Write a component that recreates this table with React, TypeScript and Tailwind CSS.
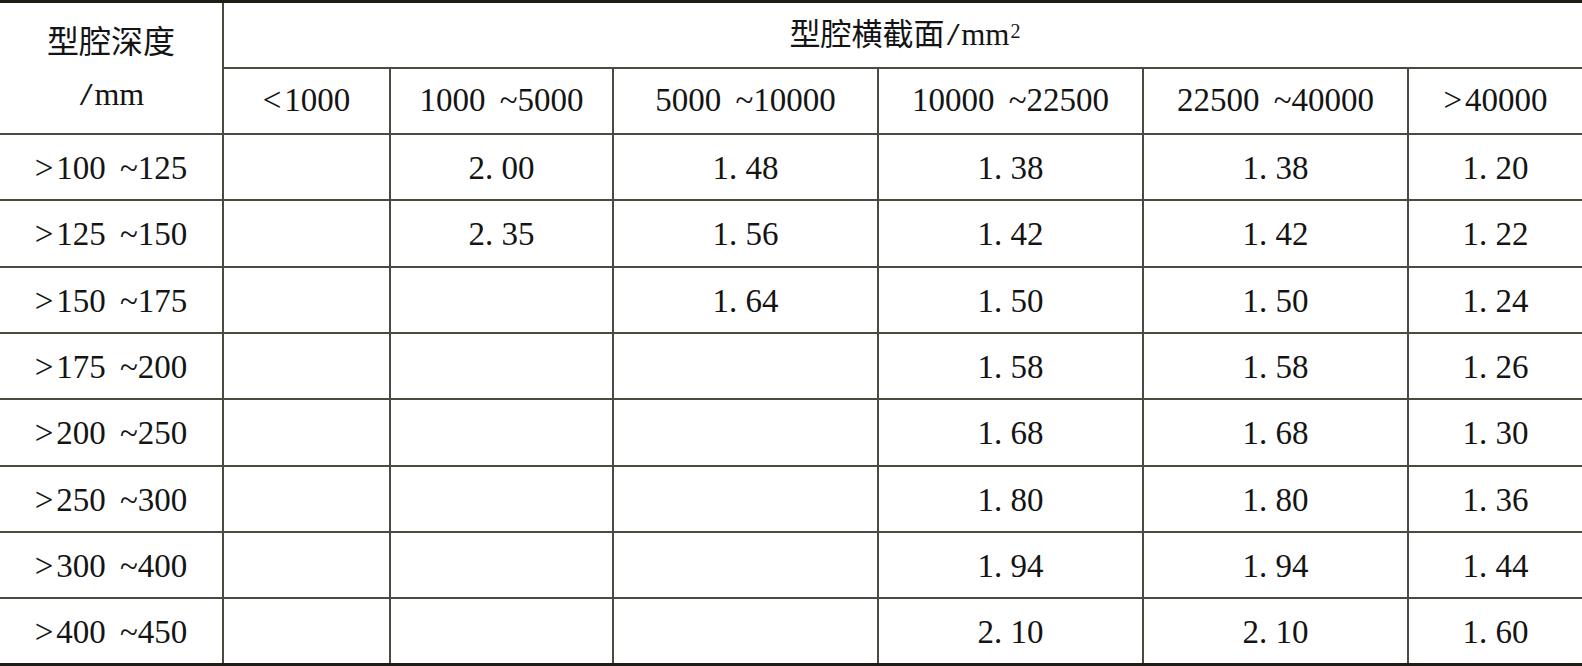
import React from 'react';

// 型腔深度 × 型腔横截面 系数表
const sizeCols = ['<1000', '1000 ~5000', '5000 ~10000', '10000 ~22500', '22500 ~40000', '>40000'];

const rows: string[][] = [
  ['>100 ~125', '', '2. 00', '1. 48', '1. 38', '1. 38', '1. 20'],
  ['>125 ~150', '', '2. 35', '1. 56', '1. 42', '1. 42', '1. 22'],
  ['>150 ~175', '', '', '1. 64', '1. 50', '1. 50', '1. 24'],
  ['>175 ~200', '', '', '', '1. 58', '1. 58', '1. 26'],
  ['>200 ~250', '', '', '', '1. 68', '1. 68', '1. 30'],
  ['>250 ~300', '', '', '', '1. 80', '1. 80', '1. 36'],
  ['>300 ~400', '', '', '', '1. 94', '1. 94', '1. 44'],
  ['>400 ~450', '', '', '', '2. 10', '2. 10', '1. 60'],
];

const line = 'border-[#4a4a40]';

// 范围文字：比较符后留一点空隙
const Range = ({ text }: { text: string }) => {
  const sign = text[0] === '>' || text[0] === '<' ? text[0] : '';
  const rest = sign ? text.slice(1) : text;
  return (
    <span className="[word-spacing:6px]">
      {sign && <span className="mr-[3px]">{sign}</span>}
      {rest}
    </span>
  );
};

const Slash = () => (
  <span className="inline-block mx-[4px] text-[31px] scale-x-[1.5]">/</span>
);

export default function App() {
  return (
    <div className="w-[1582px] h-[666px] bg-white text-[#141414] font-['Liberation_Serif','Noto_Sans_CJK_SC',serif] text-[33px]">
      <div className="grid h-full grid-cols-[224px_167px_223px_265px_265px_265px_1fr] grid-rows-[66px_66px_repeat(7,66.33px)_1fr] border-y-[3px] border-[#1f1e16]">
        {/* 表头 */}
        <div className={`row-span-2 flex flex-col items-center justify-center border-r-2 border-b-2 text-[32px] ${line}`}>
          <div className="leading-[52px]">型腔深度</div>
          <div className="leading-[52px]">
            <Slash />
            mm
          </div>
        </div>
        <div className={`col-span-6 flex items-center justify-center border-b-2 text-[31px] ${line}`}>
          <span className="ml-[4px]">
            型腔横截面
            <Slash />
            mm<sup className="text-[20px] relative -top-[7px] ml-[1px]">2</sup>
          </span>
        </div>
        {sizeCols.map((c, i) => (
          <div
            key={c}
            className={`flex items-center justify-center border-b-2 ${line} ${i < sizeCols.length - 1 ? 'border-r-2' : ''}`}
          >
            <Range text={c} />
          </div>
        ))}

        {/* 数据行 */}
        {rows.map((r, ri) =>
          r.map((v, ci) => (
            <div
              key={`${ri}-${ci}`}
              className={`flex items-center justify-center pt-[3px] ${line} ${ci < r.length - 1 ? 'border-r-2' : ''} ${
                ri < rows.length - 1 ? 'border-b-2' : ''
              }`}
            >
              {ci === 0 ? <Range text={v} /> : v}
            </div>
          ))
        )}
      </div>
    </div>
  );
}
